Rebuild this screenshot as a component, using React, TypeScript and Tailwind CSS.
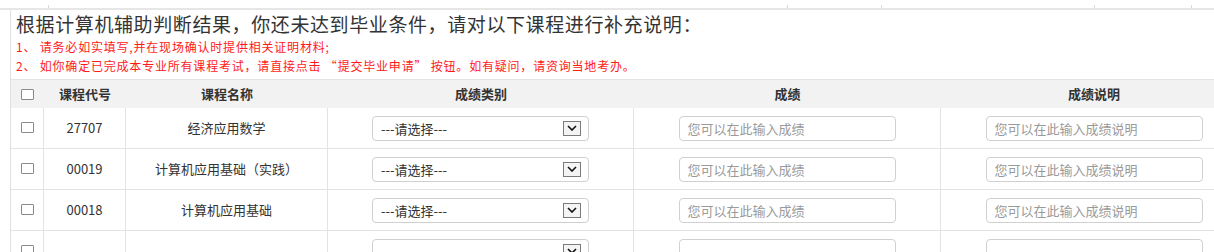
import React from "react";

const FONT = { fontFamily: '"Noto Sans CJK SC", "Noto Sans", sans-serif' };

const rows = [
  { code: "27707", name: "经济应用数学", empty: false },
  { code: "00019", name: "计算机应用基础（实践）", empty: false },
  { code: "00018", name: "计算机应用基础", empty: false },
  { code: "", name: "", empty: true },
];

function Checkbox() {
  return <span className="block w-[13px] h-[11px] border border-[#8a8a8a] bg-white rounded-[1px]" />;
}

function SelectBox({ empty }: { empty: boolean }) {
  return (
    <div className="w-[217px] h-[25px] border border-[#d0d0d0] rounded-[4px] bg-white flex items-center justify-between pl-[8px] pr-[7px]">
      <span className="text-[13px] text-[#333] leading-none">{empty ? "" : "---请选择---"}</span>
      <span className="w-[18px] h-[15px] border border-[#7a7a7a] bg-[#f4f4f4] flex items-center justify-center">
        <svg width="10" height="6" viewBox="0 0 10 6">
          <path d="M1 1 L5 5 L9 1" fill="none" stroke="#111" strokeWidth="1.6" />
        </svg>
      </span>
    </div>
  );
}

function InputBox({ text }: { text: string }) {
  return (
    <div className="w-[217px] h-[25px] border border-[#d0d0d0] rounded-[4px] bg-white flex items-center pl-[8px]">
      <span className="text-[13px] text-[#9a9a9a] leading-none">{text}</span>
    </div>
  );
}

const widths = ["w-[33px]", "w-[82px]", "w-[202px]", "w-[306px]", "w-[307px]", "w-[306px]"];

export default function App() {
  return (
    <div className="w-[1214px] h-[252px] overflow-hidden bg-white" style={FONT}>
      {/* top clipped strip */}
      <div className="flex h-[10px] border-b-2 border-[#e6e6e6]">
        <div className="w-[49px] border-r border-[#d8d8d8] mt-[5px]" />
        <div className="w-[739px] border-r border-[#d8d8d8] mt-[5px]" />
        <div className="w-[94px] border-r border-[#d8d8d8] mt-[5px]" />
        <div className="w-[213px] border-r border-[#d8d8d8] mt-[5px]" />
        <div className="w-[97px] border-r border-[#d8d8d8] mt-[5px]" />
      </div>
      <div className="ml-[10px] border-l border-[#e0e0e0] w-[1237px]">
        <div className="pl-[5px] pt-[1px] pb-[4px] border-b border-[#e3e3e3]">
          <div className="text-[19px] leading-[26px] tracking-[0.6px] text-[#333]">
            根据计算机辅助判断结果，你还未达到毕业条件，请对以下课程进行补充说明：
          </div>
          <div className="text-[12px] leading-[19px] tracking-[0.8px] text-[#ff1a1a]">
            1、 请务必如实填写,并在现场确认时提供相关证明材料;
          </div>
          <div className="text-[12px] leading-[19px] tracking-[0.8px] text-[#ff1a1a]">
            2、 如你确定已完成本专业所有课程考试，请直接点击 “提交毕业申请” 按钮。如有疑问，请资询当地考办。
          </div>
        </div>
        {/* header */}
        <div className="flex h-[28px] bg-[#f2f2f2] items-center text-[13px] font-semibold text-[#333]">
          <div className={`${widths[0]} flex justify-center`}>
            <Checkbox />
          </div>
          <div className={`${widths[1]} text-center`}>课程代号</div>
          <div className={`${widths[2]} text-center`}>课程名称</div>
          <div className={`${widths[3]} text-center`}>成绩类别</div>
          <div className={`${widths[4]} text-center`}>成绩</div>
          <div className={`${widths[5]} text-center`}>成绩说明</div>
        </div>
        {rows.map((r, i) => (
          <div key={i} className="flex h-[41px] border-b border-[#e3e3e3] text-[13px] text-[#333]">
            <div className={`${widths[0]} border-r border-[#e3e3e3] flex justify-center pt-[14px]`}>
              <Checkbox />
            </div>
            <div className={`${widths[1]} border-r border-[#e3e3e3] flex items-center justify-center`}>{r.code}</div>
            <div className={`${widths[2]} border-r border-[#e3e3e3] flex items-center justify-center`}>{r.name}</div>
            <div className={`${widths[3]} border-r border-[#e3e3e3] flex items-center justify-center`}>
              <SelectBox empty={r.empty} />
            </div>
            <div className={`${widths[4]} border-r border-[#e3e3e3] flex items-center justify-center`}>
              <InputBox text={r.empty ? "" : "您可以在此输入成绩"} />
            </div>
            <div className={`${widths[5]} flex items-center justify-center`}>
              <InputBox text={r.empty ? "" : "您可以在此输入成绩说明"} />
            </div>
          </div>
        ))}
      </div>
    </div>
  );
}
